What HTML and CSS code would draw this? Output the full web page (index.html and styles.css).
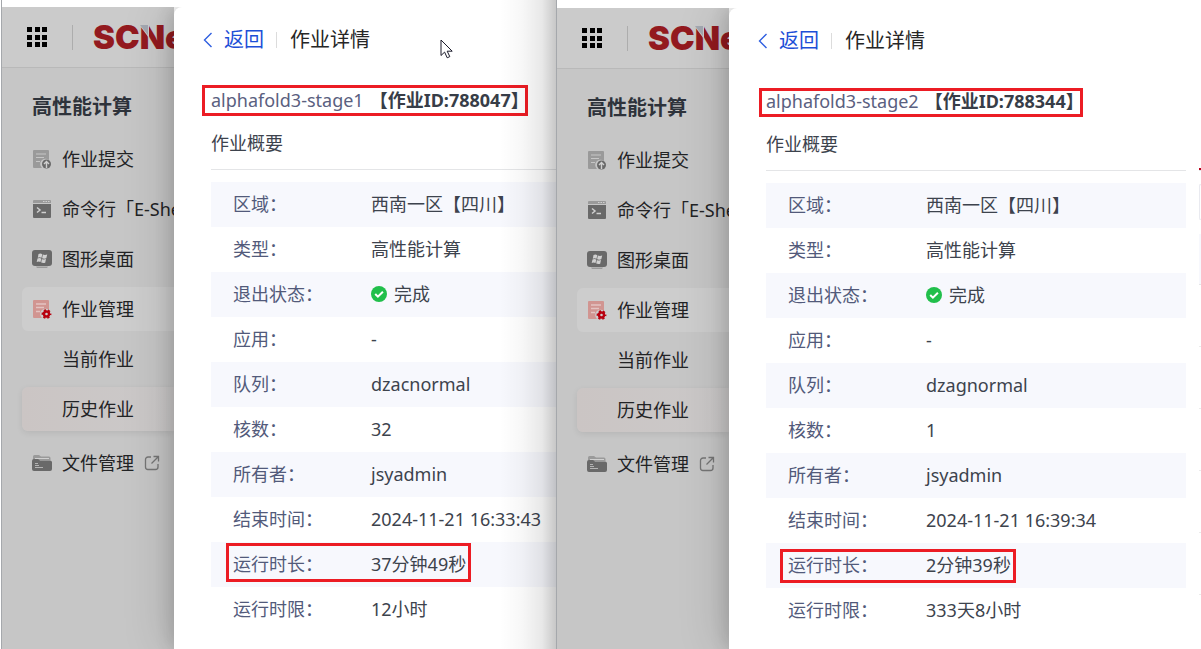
FILE: index.html
```
<!DOCTYPE html>
<html lang="zh-CN">

<head>
  <meta charset="UTF-8" />
  <meta name="viewport" content="width=device-width, initial-scale=1.0" />
  <title>作业详情</title>
  <link rel="stylesheet" href="styles.css">
</head>

<body>
  <!-- shared icons -->
  <svg class="sprite" aria-hidden="true">
    <symbol id="i-apps" viewBox="0 0 20 20">
      <path d="M0 0h5v5H0zM8 0h5v5H8zM15 0h5v5h-5zM0 8h5v5H0zM8 8h5v5H8zM15 8h5v5h-5zM0 15h5v5H0zM8 15h5v5H8zM15 15h5v5h-5z" />
    </symbol>
    <symbol id="i-submit" viewBox="0 0 20 20">
      <path fill="#9a9a9a" d="M2 1h14a1 1 0 0 1 1 1v9a5 5 0 0 0-7 8H2a1 1 0 0 1-1-1V2a1 1 0 0 1 1-1z" />
      <path stroke="#c6c6c6" stroke-width="1.200" d="M4 5h10M4 8.500h8M4 12.500h4" />
      <circle cx="14.500" cy="15" r="4.500" fill="#696969" />
      <path stroke="#d0d0d0" stroke-width="1.400" fill="none" d="M14.500 19v-6M12 15l2.500-2.500L17 15" />
    </symbol>
    <symbol id="i-shell" viewBox="0 0 20 20">
      <path fill="#9a9a9a" d="M2 1h16a1 1 0 0 1 1 1v2H1V2a1 1 0 0 1 1-1z" />
      <path stroke="#d0d0d0" d="M11 2.500h1.500M13.500 2.500H15M16 2.500h1.500" />
      <path fill="#696969" d="M1 5h18v13a1 1 0 0 1-1 1H2a1 1 0 0 1-1-1z" />
      <path stroke="#d0d0d0" stroke-width="1.500" fill="none" d="M5 8.500l3 2.500-3 2.500M9.500 13.500H14" />
    </symbol>
    <symbol id="i-desktop" viewBox="0 0 20 20">
      <rect y="1" width="20" height="16" rx="3" fill="#696969" />
      <path fill="#9a9a9a" d="M4 17.500h12l-1 1.500H5z" />
      <path fill="#d0d0d0" d="M6.500 5q2-1 3.800.2l-.8 3.500q-2-1-3.700 0zM10.900 5.500q2 .8 4.300 0l-.9 3.800q-2 .9-4.200 0zM5.500 9.500q2-1 3.800.1L8.500 13q-2-1-3.800 0zM9.900 10q2 1 4.100.1L13.200 13.700q-2 .8-4-.1z" />
    </symbol>
    <symbol id="i-manage" viewBox="0 0 20 20">
      <path fill="#d19591" d="M2 1h14a1 1 0 0 1 1 1v9a5 5 0 0 0-7 8H2a1 1 0 0 1-1-1V2a1 1 0 0 1 1-1z" />
      <path stroke="#e4c4c2" stroke-width="1.300" d="M4 5h10M4 8.500h8M4 12.500h4" />
      <circle cx="14.500" cy="15" r="2.500" fill="none" stroke="#b8000f" stroke-width="2.400" />
      <circle cx="14.500" cy="15" r="4" fill="none" stroke="#b8000f" stroke-width="1.800" stroke-dasharray="2.200 1.990" stroke-dashoffset="1.100" />
    </symbol>
    <symbol id="i-folder" viewBox="0 0 20 20">
      <path fill="#9a9a9a" d="M1 5V3.500A1.500 1.500 0 0 1 2.500 2H7l2 1.500h8A1.500 1.500 0 0 1 18.500 5v2H1z" />
      <path stroke="#d0d0d0" d="M3 5.500h14" />
      <path fill="#696969" d="M2 6h4l2 1.500h10A2 2 0 0 1 20 9v7a2 2 0 0 1-2 2H2a2 2 0 0 1-2-2V8a2 2 0 0 1 2-2z" />
      <path stroke="#b4b4b4" d="M3 10.500h3M3 12.500h4M3 14.500h8" />
    </symbol>
    <symbol id="i-external" viewBox="0 0 16 16">
      <path fill="none" stroke="#757575" stroke-width="1.300" d="M7 2H4a2.500 2.500 0 0 0-2.500 2.500V12A2.500 2.500 0 0 0 4 14.500h7.500A2.500 2.500 0 0 0 14 12V9M9.500 1.500h5v5M14.500 1.500L7.500 8.500" />
    </symbol>
    <symbol id="i-back" viewBox="0 0 10 16">
      <path fill="none" stroke="#2f5fe0" stroke-width="1.400" d="M8.500 1L1.500 8l7 7" />
    </symbol>
    <symbol id="i-done" viewBox="0 0 16 16">
      <circle cx="8" cy="8" r="8" fill="#21bf4b" />
      <path fill="none" stroke="#fff" stroke-width="2" d="M4.200 8l2.700 2.700 5-5" />
    </symbol>
    <symbol id="i-fold" viewBox="0 0 9 13">
      <path fill="#cbcbcb" d="M0 0h9v13L0 1z" />
      <path fill="#a3a8b1" d="M0 0h8v10z" />
    </symbol>
  </svg>

  <div class="compare">
    <section class="pane pane-first">
      <div class="window">
        <div class="side">
          <header class="topbar">
            <button class="apps" aria-label="应用"><svg><use href="#i-apps" /></svg></button>
            <a class="logo" href="#">SCNet<svg><use href="#i-fold" /></svg></a>
          </header>
          <nav class="menu">
            <h2>高性能计算</h2>
            <a href="#"><svg><use href="#i-submit" /></svg>作业提交</a>
            <a href="#"><svg><use href="#i-shell" /></svg>命令行「E-Shell」</a>
            <a href="#"><svg><use href="#i-desktop" /></svg>图形桌面</a>
            <a href="#" class="open"><svg><use href="#i-manage" /></svg>作业管理</a>
            <a href="#" class="sub">当前作业</a>
            <a href="#" class="sub active">历史作业</a>
            <a href="#" class="files"><svg><use href="#i-folder" /></svg>文件管理<svg class="ext"><use href="#i-external" /></svg></a>
          </nav>
        </div>
        <main class="drawer">
          <div class="drawer-head">
            <a class="back" href="#"><svg><use href="#i-back" /></svg>返回</a>
            <h1>作业详情</h1>
          </div>
          <div class="job">
            <span>alphafold3-stage1</span><strong>【作业ID:788047】</strong>
            <i class="mark mark-job"></i>
          </div>
          <h3>作业概要</h3>
          <table>
            <tr><th>区域：</th><td>西南一区【四川】</td></tr>
            <tr><th>类型：</th><td>高性能计算</td></tr>
            <tr><th>退出状态：</th><td><span class="status"><svg><use href="#i-done" /></svg>完成</span></td></tr>
            <tr><th>应用：</th><td>-</td></tr>
            <tr><th>队列：</th><td>dzacnormal</td></tr>
            <tr><th>核数：</th><td>32</td></tr>
            <tr><th>所有者：</th><td>jsyadmin</td></tr>
            <tr><th>结束时间：</th><td>2024-11-21 16:33:43</td></tr>
            <tr><th>运行时长：<i class="mark mark-time"></i></th><td>37分钟49秒</td></tr>
            <tr><th>运行时限：</th><td>12小时</td></tr>
          </table>
          <svg class="cursor" viewBox="0 0 14 20"><path d="M1 1v15.500l3.600-3.400 2.600 5.700 2.600-1.200-2.600-5.400h5z" /></svg>
        </main>
      </div>
    </section>

    <section class="pane pane-second">
      <div class="window">
        <div class="side">
          <header class="topbar">
            <button class="apps" aria-label="应用"><svg><use href="#i-apps" /></svg></button>
            <a class="logo" href="#">SCNet<svg><use href="#i-fold" /></svg></a>
          </header>
          <nav class="menu">
            <h2>高性能计算</h2>
            <a href="#"><svg><use href="#i-submit" /></svg>作业提交</a>
            <a href="#"><svg><use href="#i-shell" /></svg>命令行「E-Shell」</a>
            <a href="#"><svg><use href="#i-desktop" /></svg>图形桌面</a>
            <a href="#" class="open"><svg><use href="#i-manage" /></svg>作业管理</a>
            <a href="#" class="sub">当前作业</a>
            <a href="#" class="sub active">历史作业</a>
            <a href="#" class="files"><svg><use href="#i-folder" /></svg>文件管理<svg class="ext"><use href="#i-external" /></svg></a>
          </nav>
        </div>
        <main class="drawer">
          <div class="drawer-head">
            <a class="back" href="#"><svg><use href="#i-back" /></svg>返回</a>
            <h1>作业详情</h1>
          </div>
          <div class="job">
            <span>alphafold3-stage2</span><strong>【作业ID:788344】</strong>
            <i class="mark mark-job"></i>
          </div>
          <h3>作业概要</h3>
          <table>
            <tr><th>区域：</th><td>西南一区【四川】</td></tr>
            <tr><th>类型：</th><td>高性能计算</td></tr>
            <tr><th>退出状态：</th><td><span class="status"><svg><use href="#i-done" /></svg>完成</span></td></tr>
            <tr><th>应用：</th><td>-</td></tr>
            <tr><th>队列：</th><td>dzagnormal</td></tr>
            <tr><th>核数：</th><td>1</td></tr>
            <tr><th>所有者：</th><td>jsyadmin</td></tr>
            <tr><th>结束时间：</th><td>2024-11-21 16:39:34</td></tr>
            <tr><th>运行时长：<i class="mark mark-time"></i></th><td>2分钟39秒</td></tr>
            <tr><th>运行时限：</th><td>333天8小时</td></tr>
          </table>
        </main>
        <!-- left edge of the next panel -->
        <div class="next">
          <div class="next-tab"></div>
          <div class="next-box"></div>
          <div class="next-head"></div>
          <div class="next-row"></div>
          <div class="next-row"></div>
          <div class="next-row"></div>
          <div class="next-row"></div>
          <div class="next-row"></div>
        </div>
      </div>
    </section>
  </div>
</body>

</html>
```
FILE: styles.css
```
* {
  box-sizing: border-box;
}

body {
  margin: 0;
  background: #fff;
  color: #3d434d;
  font: 18px/28px "Noto Sans", "Noto Sans CJK SC", sans-serif;
  overflow: hidden;
}

a {
  color: inherit;
  text-decoration: none;
}

h1,
h2,
h3 {
  margin: 0;
  font-weight: 400;
}

.sprite {
  display: none;
}

.compare {
  display: grid;
  grid-template-columns: 556fr 645fr;
  min-height: 100vh;
}

.pane {
  position: relative;
  display: flex;
  min-width: 0;
  border-left: 1px solid #a5a8ac;
  padding-top: 8px;
  overflow: hidden;
}

.pane-first {
  margin-left: 1px;
  padding-top: 7px;
}

/* shadow thrown by the window on the right */
.pane-first::after {
  content: "";
  position: absolute;
  top: 0;
  right: 0;
  bottom: 0;
  width: 56px;
  background: linear-gradient(to right, rgba(0, 0, 0, 0), rgba(0, 0, 0, 0.03) 40%, rgba(0, 0, 0, 0.09) 75%, rgba(0, 0, 0, 0.22));
}

.window {
  flex: 1;
  display: flex;
  min-width: 0;
  overflow: hidden;
}

/* Sidebar */
.side {
  flex: none;
  width: 172px;
  overflow: hidden;
  background: #c6c6c6;
  color: #222325;
  white-space: nowrap;
}

.topbar {
  display: flex;
  align-items: center;
  height: 61px;
  padding-left: 25px;
  background: #cbcbcb;
  border-bottom: 1px solid #b9b9b9;
}

.apps {
  display: flex;
  padding: 0;
  border: none;
  background: none;
}

.apps svg {
  width: 20px;
  height: 20px;
}

.logo {
  position: relative;
  margin-left: 25px;
  padding-left: 20px;
  border-left: 1px solid #adadad;
  color: #931a1f;
  font: 900 33px/25px Inter, sans-serif;
}

.logo svg {
  position: absolute;
  left: 67px;
  top: 0;
  width: 9px;
  height: 13px;
}

.menu {
  display: flex;
  flex-direction: column;
  gap: 6px;
  padding: 25px 0 0 20px;
}

.menu h2 {
  margin: 0 0 10px 10px;
  font-size: 20px;
  font-weight: 700;
  color: #2e333b;
}

.menu a {
  display: flex;
  align-items: center;
  gap: 10px;
  height: 44px;
  padding-left: 10px;
  border-radius: 6px 0 0 6px;
}

.menu svg {
  flex: none;
  width: 20px;
  height: 20px;
}

.menu .ext {
  width: 16px;
  height: 16px;
}

.menu .open {
  background: #cdcdcd;
}

.menu .sub {
  padding-left: 40px;
}

.menu .active {
  background: linear-gradient(to right, #cbc5c4, #cbc9c9);
  box-shadow: 0 2px 6px rgba(0, 0, 0, 0.08);
}

.menu .files {
  margin-top: 4px;
}

/* Drawer */
.drawer {
  position: relative;
  flex: 1;
  min-width: 0;
  padding-left: 37px;
  background: #fff;
  border-radius: 8px 0 0 0;
  box-shadow: -4px 0 16px rgba(0, 0, 0, 0.12), -10px 0 44px rgba(0, 0, 0, 0.13);
}

.pane-second .drawer {
  padding-right: 13px;
}

.drawer-head {
  display: flex;
  align-items: center;
  height: 64px;
  margin-left: -8px;
  padding-top: 2px;
  font-size: 20px;
}

.back {
  display: flex;
  align-items: center;
  gap: 11px;
  color: #1d4fd7;
}

.back svg {
  width: 10px;
  height: 16px;
}

.drawer-head h1 {
  margin-left: 12px;
  padding-left: 13px;
  border-left: 1px solid #dcdcdc;
  font-size: 20px;
  line-height: 16px;
  color: #262626;
}

.job {
  position: relative;
  display: flex;
  align-items: center;
  gap: 6px;
  height: 30px;
  margin-top: 15px;
  padding-bottom: 2px;
  color: #5a6080;
  white-space: nowrap;
}

.job strong {
  color: #373d47;
}

.drawer h3 {
  height: 41px;
  margin: 13px 0 12px;
  border-bottom: 1px solid #e4e5e7;
  font-size: 18px;
}

table {
  width: 100%;
  border-collapse: collapse;
}

tr:nth-child(odd) {
  background: #f7f8fd;
}

th,
td {
  height: 45px;
  padding: 0 0 2px;
  text-align: left;
  font-weight: 400;
  white-space: nowrap;
}

th {
  position: relative;
  width: 160px;
  padding-left: 22px;
  color: #525a7a;
}

.status {
  display: flex;
  align-items: center;
  gap: 7px;
}

.status svg {
  width: 16px;
  height: 16px;
}

/* Red highlight frames laid over the content */
.mark {
  position: absolute;
  border: 3px solid #ec1c24;
}

.mark-job {
  left: -9px;
  top: -1px;
  width: 326px;
  height: 31px;
}

.mark-time {
  left: 15px;
  top: 1px;
  width: 245px;
  height: 39px;
}

.pane-second .mark-job {
  left: -7px;
  top: 1px;
  width: 324px;
  height: 29px;
}

.pane-second .mark-time {
  left: 14px;
  top: 6px;
  width: 236px;
  height: 34px;
}

.cursor {
  position: absolute;
  left: 266px;
  top: 32px;
  width: 14px;
  height: 20px;
  fill: #fff;
  stroke: #1b1b2b;
}

.next {
  position: relative;
  flex: none;
  width: 2px;
  padding-top: 160px;
  background: #fff;
}

.next-tab {
  height: 3px;
  border-top: 2px solid #b8001c;
  border-bottom: 1px solid #e4e5e7;
}

.next-box {
  height: 36px;
  margin: 13px 0 14px;
  border: 1px solid #e9eaf0;
  border-right: none;
  border-radius: 4px 0 0 4px;
}

.next-head {
  height: 51px;
  background: #f7f8fd;
  border-bottom: 1px solid #e4e5e7;
}

.next-row {
  height: 62px;
  border-bottom: 1px solid #ebebeb;
}
```
